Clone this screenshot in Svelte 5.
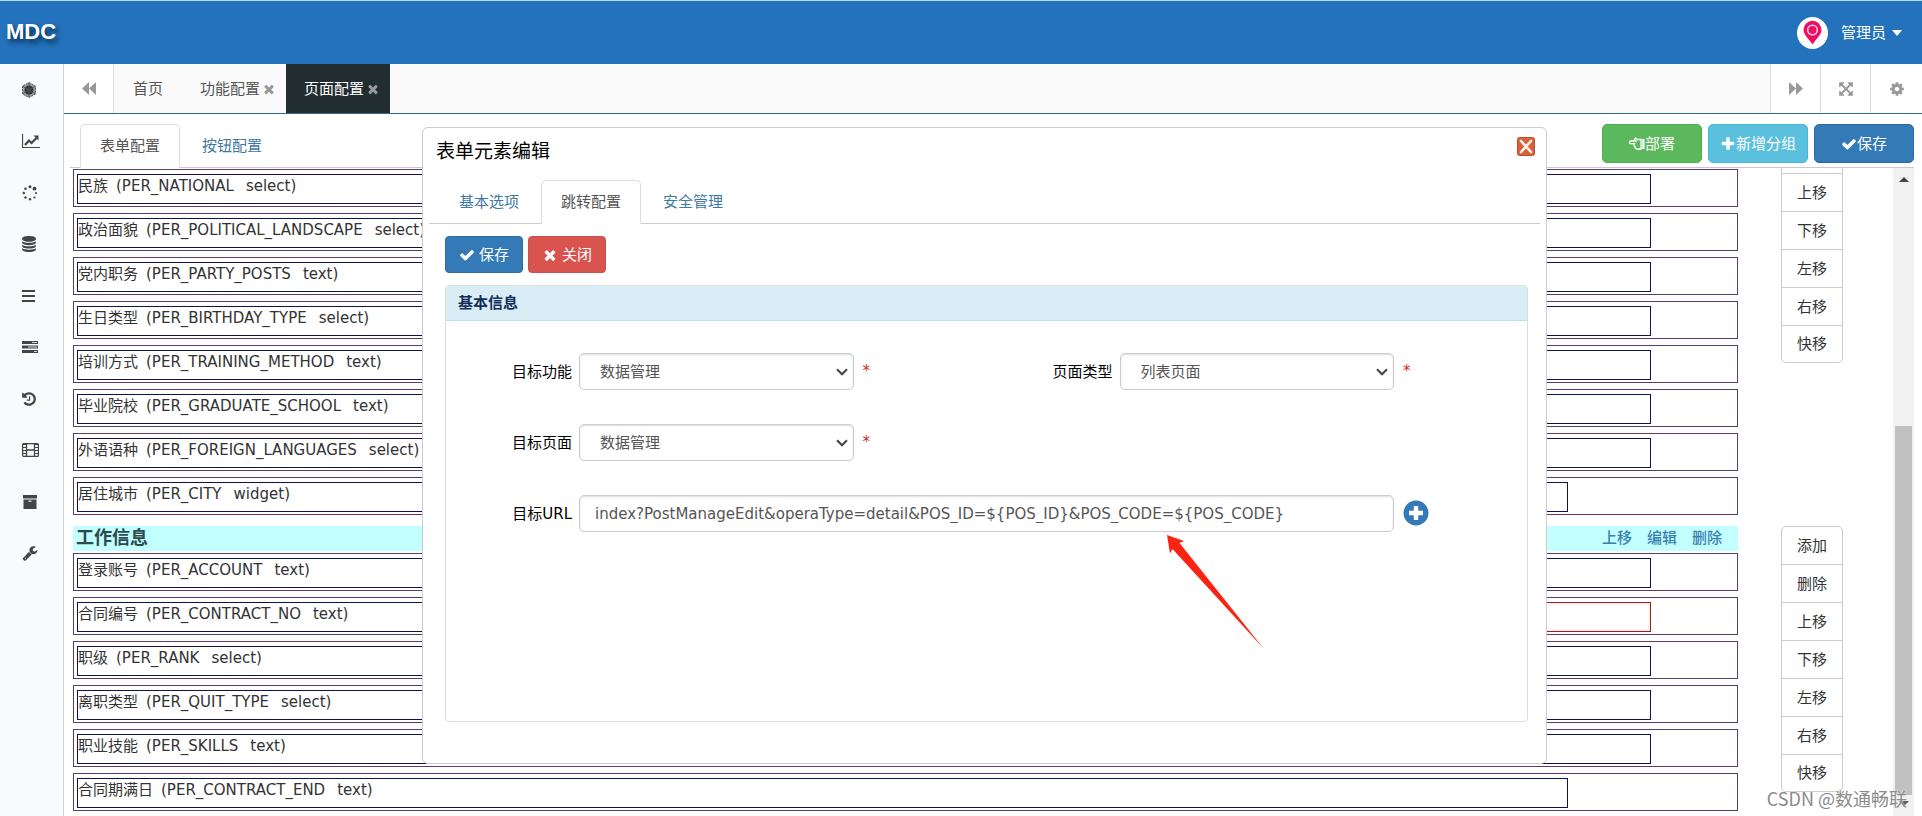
<script>
  const check =
    'M1671 566q0 40-28 68l-724 724-136 136q-28 28-68 28t-68-28l-136-136-362-362q-28-28-28-68t28-68l136-136q28-28 68-28t68 28l294 295 656-657q28-28 68-28t68 28l136 136q28 28 28 68z';
  const times =
    'M1490 1322q0 40-28 68l-136 136q-28 28-68 28t-68-28l-294-294-294 294q-28 28-68 28t-68-28l-136-136q-28-28-28-68t28-68l294-294-294-294q-28-28-28-68t28-68l136-136q28-28 68-28t68 28l294 294 294-294q28-28 68-28t68 28l136 136q28 28 28 68t-28 68l-294 294 294 294q28 28 28 68z';
  const plus =
    'M1600 736v192q0 40-28 68t-68 28h-416v416q0 40-28 68t-68 28h-192q-40 0-68-28t-28-68v-416h-416q-40 0-68-28t-28-68v-192q0-40 28-68t68-28h416v-416q0-40 28-68t68-28h192q40 0 68 28t28 68v416h416q40 0 68 28t28 68z';
  const cog =
    'M1152 896q0-106-75-181t-181-75-181 75-75 181 75 181 181 75 181-75 75-181zm512-109v222q0 12-8 23t-20 13l-185 28q-19 54-39 91 35 50 107 138 10 12 10 25t-9 23q-27 37-99 108t-94 71q-12 0-26-9l-138-108q-44 23-91 38-16 136-29 186-7 28-36 28h-222q-14 0-24.5-8.5t-11.5-21.5l-28-184q-49-16-90-37l-141 107q-10 9-25 9-14 0-25-11-126-114-165-168-7-10-7-23 0-12 8-23 15-21 51-66.5t54-70.5q-27-50-41-99l-183-27q-13-2-21-12.5t-8-23.5v-222q0-12 8-23t19-13l186-28q14-46 39-92-40-57-107-138-10-12-10-24 0-10 9-23 26-36 98.5-107.5t94.5-71.5q13 0 26 10l138 107q44-23 91-38 16-136 29-186 7-28 36-28h222q14 0 24.5 8.5t11.5 21.5l28 184q49 16 90 37l142-107q9-9 24-9 13 0 25 10 129 119 165 170 7 8 7 22 0 12-8 23-15 21-51 66.5t-54 70.5q26 50 41 98l183 28q13 2 21 12.5t8 23.5z';
  const wrench =
    'M448 1472q0-26-19-45t-45-19-45 19-19 45 19 45 45 19 45-19 19-45zm644-420l-682 682q-37 37-90 37-52 0-91-37l-106-108q-38-36-38-90 0-53 38-91l681-681q39 98 114.5 173.5t173.5 114.5zm634-435q0 39-23 106-47 134-164.5 217.5t-258.5 83.5q-185 0-316.5-131.5t-131.5-316.5 131.5-316.5 316.5-131.5q58 0 121.5 16.5t107.5 46.5q16 11 16 28t-16 28l-293 169v224l193 107q5-3 79-48.5t135.5-81 70.5-35.5q15 0 23.5 10t8.5 25z';
  const database =
    'M896 768q237 0 443-43t325-127v170q0 69-103 128t-280 93.5-385 34.5-385-34.5-280-93.5-103-128v-170q119 84 325 127t443 43zm0 768q237 0 443-43t325-127v170q0 69-103 128t-280 93.5-385 34.5-385-34.5-280-93.5-103-128v-170q119 84 325 127t443 43zm0-384q237 0 443-43t325-127v170q0 69-103 128t-280 93.5-385 34.5-385-34.5-280-93.5-103-128v-170q119 84 325 127t443 43zm0-1152q208 0 385 34.5t280 93.5 103 128v128q0 69-103 128t-280 93.5-385 34.5-385-34.5-280-93.5-103-128v-128q0-69 103-128t280-93.5 385-34.5z';
  const history =
    'M1664 896q0 156-61 298t-164 245-245 164-298 61q-172 0-327-72.5t-264-204.5q-7-10-6.5-22.5t8.5-20.5l137-138q10-9 25-9 16 2 23 12 73 95 179 147t225 52q104 0 198.5-40.5t163.5-109.5 109.5-163.5 40.5-198.5-40.5-198.5-109.5-163.5-163.5-109.5-198.5-40.5q-98 0-188 35.5t-160 101.5l137 138q31 30 14 69-17 40-59 40h-448q-26 0-45-19t-19-45v-448q0-42 40-59 39-17 69 14l130 129q107-101 244.5-156.5t284.5-55.5q156 0 298 61t245 164 164 245 61 298zm-640-288v448q0 14-9 23t-23 9h-320q-14 0-23-9t-9-23v-64q0-14 9-23t23-9h224v-352q0-14 9-23t23-9h64q14 0 23 9t9 23z';
  const expand =
    'M1411 541l-355 355 355 355 144-144q29-31 70-14 39 17 39 59v448q0 26-19 45t-45 19h-448q-42 0-59-40-17-39 14-69l144-144-355-355-355 355 144 144q31 30 14 69-17 40-59 40h-448q-26 0-45-19t-19-45v-448q0-42 40-59 39-17 69 14l144 144 355-355-355-355-144 144q-19 19-45 19-12 0-24-5-40-17-40-59v-448q0-26 19-45t45-19h448q42 0 59 40 17 39-14 69l-144 144 355 355 355-355-144-144q-31-30-14-69 17-40 59-40h448q26 0 45 19t19 45v448q0 42-39 59-13 5-25 5-26 0-45-19z';

  const menu = ['分子', '统计', '进度', '数据', '列表', '服务', '历史', '影像', '归档', '工具'];

  const personal = [
    ['民族', 'PER_NATIONAL', 'select'],
    ['政治面貌', 'PER_POLITICAL_LANDSCAPE', 'select'],
    ['党内职务', 'PER_PARTY_POSTS', 'text'],
    ['生日类型', 'PER_BIRTHDAY_TYPE', 'select'],
    ['培训方式', 'PER_TRAINING_METHOD', 'text'],
    ['毕业院校', 'PER_GRADUATE_SCHOOL', 'text'],
    ['外语语种', 'PER_FOREIGN_LANGUAGES', 'select'],
    ['居住城市', 'PER_CITY', 'widget', 'narrow']
  ];
  const work = [
    ['登录账号', 'PER_ACCOUNT', 'text'],
    ['合同编号', 'PER_CONTRACT_NO', 'text', 'required'],
    ['职级', 'PER_RANK', 'select'],
    ['离职类型', 'PER_QUIT_TYPE', 'select'],
    ['职业技能', 'PER_SKILLS', 'text'],
    ['合同期满日', 'PER_CONTRACT_END', 'text', 'narrow']
  ];
  const actions = ['添加', '删除', '上移', '下移', '左移', '右移', '快移'];
  let url = $state('index?PostManageEdit&operaType=detail&POS_ID=${POS_ID}&POS_CODE=${POS_CODE}');
</script>

{#snippet fa(d, size = 16)}
  <svg width={size} height={size} viewBox="0 0 1792 1792" aria-hidden="true"><path {d} fill="currentColor" /></svg>
{/snippet}

{#snippet fields(rows)}
  <div class="rows">
    {#each rows as [name, code, kind, look]}
      <div class="row">
        <div class={['cell', look]}>
          <span>{name}</span><span class="code">({code}</span><span class="kind">{kind})</span>
        </div>
        {#if look === 'required'}<div class="cell alert"></div>{/if}
      </div>
    {/each}
  </div>
{/snippet}

{#snippet picker(id, label, value)}
  <label for={id}>{label}</label>
  <div class="control">
    <div class="select">
      <select {id}><option>{value}</option></select>
      <svg width="12" height="8" viewBox="0 0 12 8" aria-hidden="true"><path d="M1 1.3L6 6.3L11 1.3" fill="none" stroke="#444" stroke-width="2" /></svg>
    </div>
    <div class="tail"><span class="star">*</span></div>
  </div>
{/snippet}

<div class="app">
  <header>
    <a class="brand" href="#top">MDC</a>
    <button class="user">
      <svg width="31" height="32" viewBox="0 0 31 32" aria-hidden="true">
        <ellipse cx="15.500" cy="16" rx="15.500" ry="16" fill="#fff" />
        <path d="M15.500 27.500C12 22 6.500 18 6.500 12.800a9 9 0 0 1 18 0C24.500 18 19 22 15.500 27.500z" fill="#ec0f64" />
        <circle cx="15.500" cy="13" r="4.800" fill="none" stroke="#fbd3e2" stroke-width="1.500" />
      </svg>
      <span>管理员</span>
      <i class="caret"></i>
    </button>
  </header>

  <div class="body">
    <nav class="side">
      {#each menu as item, i}
        <a href="#menu" aria-label={item}>
          {#if i === 0}
            <svg width="16" height="16" viewBox="0 0 16 16"><path d="M7 .5L13.500 4v8L7 15.500L.5 12V4z" fill="#9a9da0" stroke="#555" stroke-dasharray="2 1" /><circle cx="7" cy="8" r="4.500" fill="#333" /><path d="M7 1v14M1 4.500l12 7M1 11.500l12-7" stroke="#555" stroke-width="1" /></svg>
          {:else if i === 1}
            <svg width="18" height="14" viewBox="0 0 18 14"><path d="M.5 0v13.500H18" fill="none" stroke="#444" stroke-width="1.200" /><path d="M3 11l4-4.500 2.500 2.500 5-5" fill="none" stroke="#444" stroke-width="2.200" /><path d="M11.500 1.500H16.500V6.500z" fill="#444" /></svg>
          {:else if i === 2}
            <svg width="16" height="16" viewBox="0 0 16 16" fill="#444"><circle cx="8" cy="1.800" r="1.500" /><circle cx="12.500" cy="3.700" r="1.900" /><circle cx="14" cy="8" r="1" /><circle cx="12.500" cy="12.500" r="1.100" /><circle cx="8" cy="14.300" r="1.200" /><circle cx="3.500" cy="12.500" r="1.200" /><circle cx="1.800" cy="8" r="1.200" /><circle cx="3.500" cy="3.700" r="1.300" /></svg>
          {:else if i === 3}
            <span class="tight">{@render fa(database)}</span>
          {:else if i === 4}
            <svg width="14" height="12" viewBox="0 0 14 12"><path d="M0 1h13M0 6h13M0 11h13" stroke="#444" stroke-width="2" /></svg>
          {:else if i === 5}
            <svg width="16" height="12" viewBox="0 0 16 12"><path d="M0 0h16v3H0zM0 4.500h16v3H0zM0 9h16v3H0z" fill="#444" /><path d="M10 1.500h5M6 6h9M12 10.500h3" stroke="#d5d8da" stroke-width="1" /></svg>
          {:else if i === 6}
            <span class="tight">{@render fa(history)}</span>
          {:else if i === 7}
            <svg width="17" height="14" viewBox="0 0 17 14"><rect x=".6" y=".6" width="15.800" height="12.800" rx="1" fill="none" stroke="#444" stroke-width="1.200" /><path d="M4.500 0v14M12.500 0v14M4.500 7h8" stroke="#444" stroke-width="1.300" /><path d="M2.500 1v12M14.500 1v12" stroke="#444" stroke-width="3" stroke-dasharray="1 2" /></svg>
          {:else if i === 8}
            <svg width="16" height="14" viewBox="0 0 16 14"><path d="M1 0h14v3.500H1zM1.500 4.500h13V14h-13z" fill="#444" /><path d="M6.500 6.200h3" stroke="#eee" stroke-width="1.200" /></svg>
          {:else}
            {@render fa(wrench)}
          {/if}
        </a>
      {/each}
    </nav>

    <main>
      <div class="topbar">
        <button class="tool" aria-label="向左"><svg width="14" height="13" viewBox="0 0 14 13"><path d="M7 0v13L0 6.500zM14 0v13L7 6.500z" fill="#999" /></svg></button>
        <a class="page home" href="#home">首页</a>
        <a class="page" href="#func">功能配置<span>{@render fa(times, 14)}</span></a>
        <a class="page active" href="#page">页面配置<span>{@render fa(times, 14)}</span></a>
        <div class="spring"></div>
        <button class="tool right" aria-label="向右"><svg width="14" height="13" viewBox="0 0 14 13"><path d="M0 0v13l7-6.500zM7 0v13l7-6.500z" fill="#999" /></svg></button>
        <button class="tool right" aria-label="全屏">{@render fa(expand)}</button>
        <button class="tool right" aria-label="设置">{@render fa(cog)}</button>
      </div>

      <div class="content">
        <div class="tabs outer">
          <a class="tab on" href="#form">表单配置</a>
          <a class="tab" href="#buttons">按钮配置</a>
          <div class="spring"></div>
          <div class="big">
            <button class="btn green"><svg width="16" height="14" viewBox="0 0 16 14"><path d="M12 2.500H8.500L6.500 1 5.500 2.200 7 4H1.500a1.200 1.200 0 0 0 0 2.600H5.500C4.600 8 5 9 6 9.500 6 11 6.800 12 8 12h4z" fill="none" stroke="#fff" stroke-width="1.300" /><path d="M13.200 2h2.300v10h-2.300z" fill="#fff" /></svg>部署</button>
            <button class="btn cyan">{@render fa(plus)}新增分组</button>
            <button class="btn blue">{@render fa(check)}保存</button>
          </div>
        </div>

        <div class="scroller">
          <div class="canvas">
            <section>
              {@render fields(personal)}
              <div class="group scrolled">{#each actions.slice(2) as a}<button>{a}</button>{/each}</div>
            </section>
            <section>
              <div>
                <div class="heading">
                  <h2>工作信息</h2>
                  <a href="#up">上移</a><a href="#edit">编辑</a><a href="#del">删除</a>
                </div>
                {@render fields(work)}
              </div>
              <div class="group">{#each actions as a}<button>{a}</button>{/each}</div>
            </section>
          </div>
          <div class="bar" aria-hidden="true"><i class="up"></i><i class="thumb"></i><i class="down"></i></div>
        </div>
      </div>

      <div class="dialog" role="dialog" aria-labelledby="dialog-title">
        <div class="title">
          <h1 id="dialog-title">表单元素编辑</h1>
          <button aria-label="关闭窗口">
            <svg width="18" height="19" viewBox="0 0 18 19"><rect x=".5" y=".5" width="17" height="18" rx="2" fill="#d8603c" stroke="#c04a2c" /><path d="M4 4l10 11M14 4L4 15" stroke="#fff3e8" stroke-width="2.600" stroke-linecap="round" /></svg>
          </button>
        </div>
        <div class="tabs inner">
          <a class="tab" href="#basic">基本选项</a>
          <a class="tab on" href="#jump">跳转配置</a>
          <a class="tab" href="#safe">安全管理</a>
        </div>
        <div class="small">
          <button class="btn blue">{@render fa(check)}保存</button>
          <button class="btn red">{@render fa(times)}关闭</button>
        </div>
        <div class="panel">
          <h3>基本信息</h3>
          <form>
            {@render picker('func', '目标功能', '数据管理')}
            {@render picker('type', '页面类型', '列表页面')}
            {@render picker('page', '目标页面', '数据管理')}
            <label class="first" for="url">目标URL</label>
            <div class="control wide">
              <input id="url" type="text" bind:value={url} />
              <div class="tail">
                <button class="add" type="button" aria-label="添加参数"><svg width="26" height="26" viewBox="0 0 26 26"><circle cx="13" cy="13" r="12.500" fill="#337ab7" /><path d="M13 6v14M6 13h14" stroke="#fff" stroke-width="4.400" /></svg></button>
              </div>
            </div>
          </form>
        </div>
        <svg class="pointer" width="98" height="115" viewBox="0 0 98 115" aria-hidden="true"><path d="M0 0L17 6L12.500 8L97 114L5.500 14L3 18.500z" fill="#fb2413" /></svg>
      </div>
    </main>
  </div>
  <div class="mark">CSDN @数通畅联</div>
</div>

<style>
  :global(body) { margin: 0; }
  .app { position: relative; display: flex; flex-direction: column; height: 100vh; overflow: hidden; background: #fff; color: #333; font: 15px/24px "DejaVu Sans", "Noto Sans CJK SC", sans-serif; }
  .app * { box-sizing: border-box; }
  a { color: inherit; text-decoration: none; }
  button { font: inherit; color: inherit; border: 0; padding: 0; background: none; cursor: pointer; }
  svg { display: block; flex: none; }
  h1, h2, h3 { margin: 0; }
  .spring { flex: 1; }

  header { flex: none; display: flex; justify-content: space-between; align-items: center; height: 64px; padding: 0 20px 0 6px; background: #2372bb; border-top: 1px solid #b5def5; }
  .brand { padding-bottom: 2px; color: #fff; font: bold 22px/30px "Liberation Sans", sans-serif; text-shadow: 3px 4px 5px #0a2c50; }
  .user { display: flex; align-items: center; color: #fff; }
  .user span { margin: 0 6px 0 13px; }
  .caret { border: 5px solid transparent; border-top: 6px solid #fff; border-bottom: 0; }

  .body { flex: 1; display: flex; min-height: 0; }
  .side { flex: none; width: 64px; background: #f8fafc; border-right: 1px solid #ccd2da; color: #444; }
  .side a { display: flex; align-items: center; height: 51px; padding-left: 22px; }
  .side a:nth-child(even) { height: 52px; }
  .tight { margin-left: -1px; }
  main { position: relative; flex: 1; min-width: 0; display: flex; flex-direction: column; }

  .topbar { flex: none; display: flex; height: 50px; background: #fafafa; border-bottom: 1px solid #2f6d8a; color: #999; }
  .tool { display: flex; align-items: center; justify-content: center; width: 50px; background: #fff; border-right: 1px solid #ddd; color: #999; }
  .tool.right { border-right: 0; border-left: 1px solid #ddd; }
  .tool.right:last-child { width: 52px; }
  .page { display: flex; align-items: center; padding: 0 10px 0 18px; color: #555; }
  .page.home { padding: 0 19px; }
  .page span { margin-left: 2px; color: #999; }
  .page.active { background: #222d32; color: #fff; }

  .content { flex: 1; display: flex; flex-direction: column; min-height: 0; padding: 10px 8px 0 6px; }
  .tabs { display: flex; border-bottom: 1px solid #ccc; }
  .tab { display: flex; align-items: center; height: 44px; padding: 0 19px; border: 1px solid transparent; margin-bottom: -1px; color: #4078a5; }
  .tab.on { color: #555; background: #fff; border-color: #ddd; border-bottom-color: #fff; border-radius: 5px 5px 0 0; }
  .tab + .tab { margin-left: 2px; }
  .outer { flex: none; padding-left: 10px; border-color: #cfc6d2; }
  .big { display: flex; gap: 6px; height: 39px; }
  .btn { display: flex; align-items: center; justify-content: center; border-radius: 5px; color: #fff; }
  .big .btn { width: 100px; }
  .green { background: #5cb85c; border: 1px solid #4cae4c; }
  .cyan { background: #5bc0de; border: 1px solid #46b8da; }
  .blue { background: #337ab7; border: 1px solid #2e6da4; }
  .red { background: #d9534f; border: 1px solid #c9504c; }

  .scroller { flex: 1; display: flex; min-height: 0; }
  .canvas { flex: 1; overflow: hidden; padding: 1px 50px 0 3px; }
  section { display: grid; grid-template-columns: 1fr 62px; column-gap: 43px; align-items: start; margin-bottom: 11px; }
  .rows { display: grid; gap: 6px; }
  .row { display: flex; height: 38px; padding: 4px 3px 0; border: 1px solid #5a3d6b; }
  .cell { display: flex; width: 95%; height: 30px; border: 1px solid #10104f; line-height: 23px; white-space: nowrap; }
  .cell.narrow { width: 90%; }
  .cell.required { width: 30%; border-right: 0; }
  .cell.alert { width: 65%; border-color: #8f2626; border-left: 0; box-shadow: inset 0 0 3px #f5bcbc; }
  .code { margin-left: 8px; }
  .kind { margin-left: 12px; }
  .heading { display: flex; gap: 15px; height: 25px; margin-bottom: 2px; padding: 0 16px 0 3px; background: #c3ffff; color: #3b7fb0; font-weight: 500; }
  .heading h2 { flex: 1; color: #2b4a50; font-size: 18px; font-weight: bold; }
  .group { display: flex; flex-direction: column; border: 1px solid #ccc; border-radius: 5px; }
  .group button { height: 38px; border-bottom: 1px solid #ccc; }
  .group.scrolled { margin-top: -1px; padding-top: 5px; border-top: 0; border-radius: 0 0 5px 5px; }
  .group.scrolled button:first-child { height: 39px; border-top: 1px solid #ccc; }
  .group button:last-child { height: 36px; border-bottom: 0; }
  .bar { display: flex; flex-direction: column; align-items: center; width: 21px; background: #f1f1f1; }
  .up { margin-top: 9px; border: 5px solid transparent; border-bottom-color: #444; border-top: 0; }
  .thumb { width: 17px; height: 57%; margin-top: auto; background: #c1c1c1; }
  .down { margin: 6px 0 10px; border: 5px solid transparent; border-top-color: #555; border-bottom: 0; }

  .dialog { position: absolute; top: 63px; left: 358px; right: 375px; height: 637px; padding: 0 6px; background: #fff; border: 1px solid #ccc; border-radius: 6px; }
  .title { display: flex; justify-content: space-between; height: 52px; padding: 9px 5px 0 7px; }
  .title h1 { color: #000; font-size: 19px; font-weight: normal; line-height: 28px; }
  .title button { align-self: flex-start; }
  .inner { padding-left: 10px; }
  .small { display: flex; gap: 5px; padding: 12px 16px; }
  .small .btn { width: 78px; height: 37px; gap: 4px; border-radius: 4px; }
  .panel { margin: 0 12px 0 16px; height: 437px; border: 1px solid #ddd; border-radius: 4px; }
  .panel h3 { height: 35px; padding-left: 12px; background: #d9edf7; border-bottom: 1px solid #bce0ea; color: #123057; font-size: 15px; font-weight: bold; line-height: 34px; }
  form { display: grid; grid-template-columns: 133px 1fr 133px 1fr; row-gap: 34px; padding-top: 32px; color: #000; }
  label { padding: 2px 7px 0 0; text-align: right; line-height: 35px; }
  .first { grid-column: 1; }
  .control { display: flex; }
  .wide { grid-column: 2 / -1; }
  .select { position: relative; flex: 1; }
  .select svg { position: absolute; right: 6px; top: 15px; pointer-events: none; }
  select, input { width: 100%; height: 37px; padding: 0 15px; border: 1px solid #ccc; border-radius: 5px; background: #fff; box-shadow: inset 0 1px 2px #ddd; color: #555; font: inherit; }
  select { appearance: none; padding: 0 20px; }
  input { flex: 1; }
  .tail { flex: none; width: 133px; padding-left: 9px; }
  .star { color: #c9302c; line-height: 36px; }
  .add { display: block; margin-top: 5px; }
  .pointer { position: absolute; left: 744px; top: 407px; pointer-events: none; }
  .mark { position: absolute; right: 15px; bottom: 6px; color: #8b8b8b; font-family: "Noto Sans CJK SC", sans-serif; font-size: 18px; text-shadow: 0 0 2px #fff; }
</style>
